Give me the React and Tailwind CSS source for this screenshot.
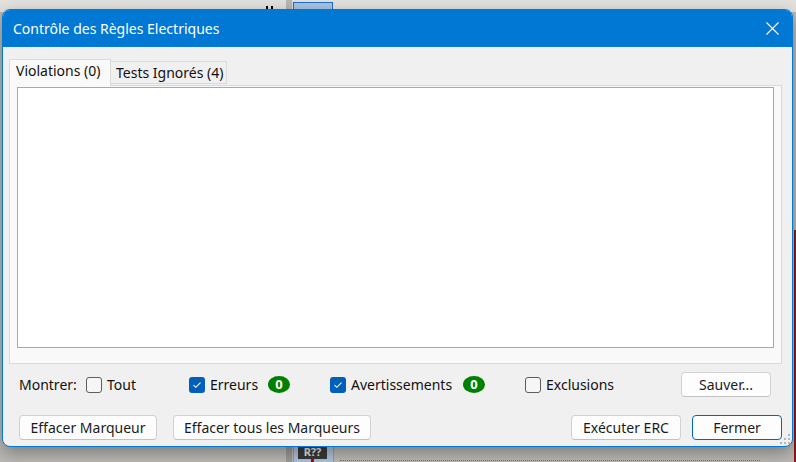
import React from "react";

const font = { fontFamily: '"Noto Sans", "Open Sans", sans-serif' };

const Check = ({ checked, label, labelWidth }) => (
  <div className="flex items-center">
    {checked ? (
      <span className="flex h-[16px] w-[16px] items-center justify-center rounded-[3px] bg-[#005fb8]">
        <svg width="10" height="8" viewBox="0 0 10 8" fill="none">
          <path d="M1.5 4.2 L3.8 6.3 L8.5 1.6" stroke="white" strokeWidth="1.1" />
        </svg>
      </span>
    ) : (
      <span className="h-[16px] w-[16px] rounded-[3px] border border-[#5d5d5d] bg-[#f6f6f6]" />
    )}
    <span className={`ml-[5px] ${labelWidth || ""}`}>{label}</span>
  </div>
);

const Badge = () => (
  <span className="flex h-[17px] w-[22px] items-center justify-center rounded-[50%] bg-[#008000] text-[13px] font-bold leading-none text-white">
    0
  </span>
);

const Button = ({ children, className = "", primary }) => (
  <button
    className={`flex h-[25px] items-center justify-center rounded-[4px] border bg-[#fdfdfd] text-[14px] text-[#1b1b1b] ${
      primary ? "border-[#0067c0]" : "border-[#d2d2d2] border-b-[#c2c2c2]"
    } ${className}`}
  >
    {children}
  </button>
);

export default function App() {
  return (
    <div className="relative h-[462px] w-[796px] overflow-hidden bg-[#bcbab7]" style={font}>
      {/* application behind the dialog */}
      <div className="absolute left-0 top-0 h-[12px] w-[796px] bg-[#e4e2df]" />
      <div className="absolute left-[286px] top-0 h-[12px] w-[6px] bg-[#b9b8b6]" />
      <div className="absolute left-[293px] top-[2px] h-[20px] w-[40px] border border-[#1e6fce] bg-[#a8c5e3]" />
      <div className="absolute left-[266px] top-[6px] h-[3px] w-[2px] bg-black" />
      <div className="absolute left-[271px] top-[6px] h-[3px] w-[2px] bg-black" />
      <div className="absolute left-[286px] top-[440px] h-[22px] w-[6px] bg-[#9e9c99]" />
      <div className="absolute left-[293px] top-[440px] h-[22px] w-[41px] border-x border-[#7ea3cf] bg-[#b0c4da]" />
      <div className="absolute left-[298px] top-[444px] flex h-[15px] w-[29px] items-center justify-center bg-[#3a3a3a] text-[11px] font-bold leading-none text-[#e8e8e8]">
        R??
      </div>
      <div className="absolute left-[311px] top-[459px] h-[3px] w-[3px] bg-[#c00000]" />
      <div className="absolute left-[794px] top-[230px] h-[232px] w-[2px] bg-[#8a1a1a]" />
      <div className="absolute left-[340px] top-[460px] h-px w-[420px] border-t border-dotted border-[#7c7a78]" />

      {/* dialog */}
      <div className="relative z-10 ml-[2px] mt-[9px] flex h-[438px] w-[791px] flex-col overflow-hidden rounded-[8px] border border-[#0078d4] bg-[#f0f0f0] shadow-[0_6px_18px_rgba(0,0,0,0.35)]">
        <div className="flex h-[37px] shrink-0 items-center justify-between bg-[#0078d4] pl-[10px] pr-[13px] text-[14px] text-white">
          <span>Contrôle des Règles Electriques</span>
          <svg width="13" height="13" viewBox="0 0 13 13">
            <path d="M0.5 0.5 L12.5 12.5 M12.5 0.5 L0.5 12.5" stroke="white" strokeWidth="1.1" />
          </svg>
        </div>

        <div className="relative flex flex-1 flex-col pl-[6px] pr-[10px] pt-[12px] text-[14px] text-[#111]">
          <div className="flex items-end">
            <div className="z-10 -mb-px flex h-[27px] w-[102px] items-center border border-b-0 border-[#dadada] bg-[#f9f9f9] pb-[5px] pl-[6px]">
              Violations (0)
            </div>
            <div className="-ml-px mb-px flex h-[23px] w-[117px] items-center border border-[#dadada] bg-[#f0f0f0] pb-px pl-[5px]">
              Tests Ignorés (4)
            </div>
          </div>
          <div className="h-[279px] border border-[#dadada] bg-[#f9f9f9] px-[7px] pt-px">
            <div className="h-[261px] border border-[#a8a8a8] bg-white" />
          </div>

          <div className="mt-[8px] flex h-[25px] items-center">
            <span className="ml-[10px] w-[67px] shrink-0">Montrer:</span>
            <div className="w-[103px] shrink-0">
              <Check label="Tout" />
            </div>
            <div className="flex w-[141px] shrink-0 items-center">
              <Check checked label="Erreurs" labelWidth="w-[58px]" />
              <Badge />
            </div>
            <div className="flex w-[195px] shrink-0 items-center">
              <Check checked label="Avertissements" labelWidth="w-[112px]" />
              <Badge />
            </div>
            <div className="flex-1">
              <Check label="Exclusions" />
            </div>
            <Button className="mr-[11px] w-[90px]">Sauver...</Button>
          </div>

          <div className="mt-[18px] flex items-center">
            <Button className="ml-[10px] w-[138px]">Effacer Marqueur</Button>
            <Button className="ml-[16px] w-[198px]">Effacer tous les Marqueurs</Button>
            <div className="flex-1" />
            <Button className="w-[110px]">Exécuter ERC</Button>
            <Button primary className="ml-[11px] w-[90px]">Fermer</Button>
          </div>

          <svg className="absolute bottom-[1px] right-[1px]" width="12" height="12" viewBox="0 0 12 12">
            <g fill="#b5b5b5">
              <rect x="9" y="1" width="2" height="2" />
              <rect x="5" y="5" width="2" height="2" />
              <rect x="9" y="5" width="2" height="2" />
              <rect x="1" y="9" width="2" height="2" />
              <rect x="5" y="9" width="2" height="2" />
              <rect x="9" y="9" width="2" height="2" />
            </g>
          </svg>
        </div>
      </div>
    </div>
  );
}
